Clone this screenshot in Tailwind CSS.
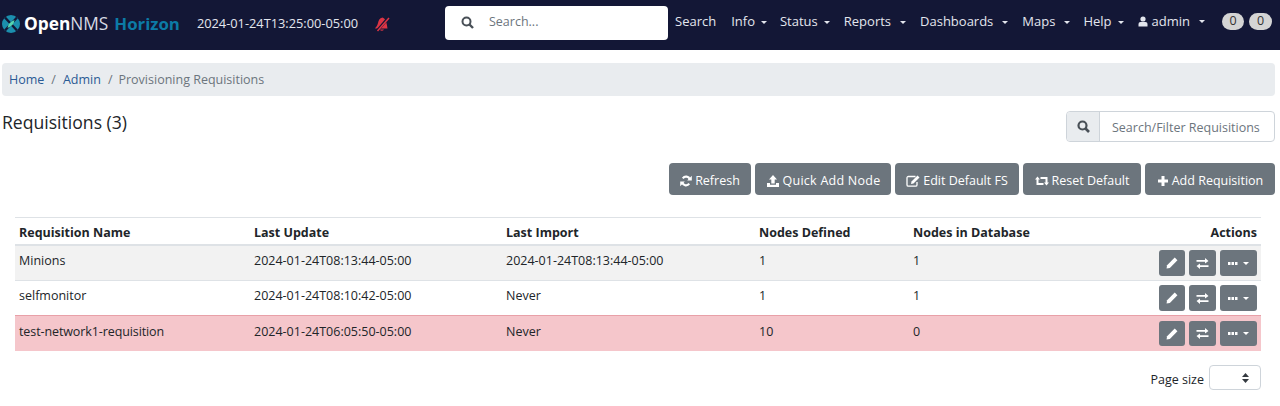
<!DOCTYPE html>
<html><head><meta charset="utf-8"><script src="https://cdn.jsdelivr.net/npm/@tailwindcss/browser@4"></script></head>
<body class="bg-white font-['Open_Sans',sans-serif] text-[12.5px] text-[#212529] h-[406px] overflow-hidden">
<nav class="h-[50px] bg-[#131736] flex items-center text-[#e3e6ee] text-[13px]">
  <div class="flex items-center w-[445px] shrink-0 h-full pb-[2px]">
    <svg class="ml-[2px] w-[18px] h-[18px] mr-[4px]" viewBox="0 0 18 18"><circle cx="9" cy="9" r="9" fill="#1b8fae"/><path d="M3 2.500L15 15.500M15 2.500L3 15.500" stroke="#131736" stroke-width="2.400"/><path d="M5.500 13Q6 7.500 12.500 5Q12 10.500 5.500 13Z" fill="#55d6b2"/></svg>
    <span class="text-[17.3px] leading-none text-white font-bold">Open<span class="font-normal text-[#d8dbe4]">NMS</span></span>
    <span class="text-[16.8px] leading-none font-bold text-[#0c7ba6] ml-[6px]">Horizon</span>
    <span class="ml-[17px] text-[12.8px] text-[#e3e6ee]">2024-01-24T13:25:00-05:00</span>
    <svg class="ml-[16px] w-[16px] h-[16px]" viewBox="0 0 16 16"><path d="M8.500 1.500C5.500 2 4.500 4.500 4 7C3.500 9.500 2 11 1 12.500H13.500C13 9 12.500 3 8.500 1.500Z" fill="#dc3545"/><path d="M5.500 13.500Q8 16 10 13.500Z" fill="#dc3545"/><path d="M15 1L3 15" stroke="#131736" stroke-width="2.800"/><path d="M15 2L3.500 15" stroke="#dc3545" stroke-width="1.500"/></svg>
  </div>
  <div class="w-[223px] h-[34px] bg-white rounded-[4px] flex items-center shrink-0 mt-[-5px]">
    <svg class="ml-[16px] w-[13px] h-[13px]" viewBox="0 0 13 13"><circle cx="5.500" cy="5.500" r="4" fill="none" stroke="#495057" stroke-width="2"/><path d="M8.500 8.500L12 12" stroke="#495057" stroke-width="2.400"/></svg>
    <span class="ml-[15px] text-[#6c757d] text-[12.5px]">Search...</span>
  </div>
  <div class="flex items-center ml-[7px] mt-[-7px] whitespace-nowrap">
    <span>Search</span>
    <span class="ml-[15px]">Info<span class="ml-[6px] inline-block align-middle border-x-[3px] border-t-[3px] border-x-transparent border-t-[#e3e6ee]"></span></span>
    <span class="ml-[13px]">Status<span class="ml-[6px] inline-block align-middle border-x-[3px] border-t-[3px] border-x-transparent border-t-[#e3e6ee]"></span></span>
    <span class="ml-[14px]">Reports<span class="ml-[9px] inline-block align-middle border-x-[3px] border-t-[3px] border-x-transparent border-t-[#e3e6ee]"></span></span>
    <span class="ml-[14px]">Dashboards<span class="ml-[9px] inline-block align-middle border-x-[3px] border-t-[3px] border-x-transparent border-t-[#e3e6ee]"></span></span>
    <span class="ml-[14px]">Maps<span class="ml-[9px] inline-block align-middle border-x-[3px] border-t-[3px] border-x-transparent border-t-[#e3e6ee]"></span></span>
    <span class="ml-[13px]">Help<span class="ml-[6px] inline-block align-middle border-x-[3px] border-t-[3px] border-x-transparent border-t-[#e3e6ee]"></span></span>
    <span class="ml-[14px] flex items-center"><svg class="w-[10px] h-[11px] mr-[4px]" viewBox="0 0 10 11"><circle cx="5" cy="3" r="2.600" fill="#e3e6ee"/><path d="M0.500 10.500V8Q0.500 6 2.500 6H7.500Q9.500 6 9.500 8V10.500Z" fill="#e3e6ee"/></svg>admin<span class="ml-[9px] inline-block align-middle border-x-[3px] border-t-[3px] border-x-transparent border-t-[#e3e6ee]"></span></span>
    <span class="ml-[17px] flex gap-[5px]"><span class="w-[22px] h-[17px] rounded-full bg-[#d4d4d4] text-[#333] text-[12.5px] flex items-center justify-center">0</span><span class="w-[23px] h-[17px] rounded-full bg-[#d4d4d4] text-[#333] text-[12.5px] flex items-center justify-center">0</span></span>
  </div>
</nav>
<div class="mt-[13px] ml-[2px] mr-[5px] h-[33px] bg-[#e9ecef] rounded-[4px] flex items-center px-[7px] text-[#6c757d] pt-[2px]">
  <span class="text-[#2a5a94]">Home</span><span class="mx-[7px]">/</span><span class="text-[#2a5a94]">Admin</span><span class="ml-[7px] mr-[6px]">/</span><span>Provisioning Requisitions</span>
</div>
<div class="flex justify-between items-start mt-[15px] pr-[5px] pl-[2px] h-[52px]">
  <h1 class="text-[17.6px] leading-[24px] mt-[-1px]">Requisitions (3)</h1>
  <div class="flex w-[209px] h-[31px] border border-[#ced4da] rounded-[4px] bg-white">
    <span class="w-[33px] bg-[#e9ecef] border-r border-[#ced4da] flex items-center justify-center rounded-l-[4px]"><svg class="w-[13px] h-[13px]" viewBox="0 0 13 13"><circle cx="5.500" cy="5.500" r="4" fill="none" stroke="#495057" stroke-width="2.200"/><path d="M8.500 8.500L12 12" stroke="#495057" stroke-width="2.600"/></svg></span>
    <span class="pl-[12px] pt-[3px] flex items-center text-[#6c757d]">Search/Filter Requisitions</span>
  </div>
</div>
<div class="flex justify-end gap-[4px] pr-[5px] h-[32px] text-white">
  <button class="w-[82px] h-[32px] pt-[4px] bg-[#6c757d] rounded-[4px] flex items-center justify-center gap-[3px]"><svg class="w-[12px] h-[12px]" viewBox="0 0 12 12"><path d="M9.800 4.300A4 4 0 0 0 2.800 3.300M2.200 7.700A4 4 0 0 0 9.200 8.700" fill="none" stroke="#fff" stroke-width="2.200"/><path d="M11.800 0.800V5.500H7.200ZM0.200 11.200V6.500H4.800Z" fill="#fff"/></svg>Refresh</button>
  <button class="w-[136px] h-[32px] pt-[4px] bg-[#6c757d] rounded-[4px] flex items-center justify-center gap-[3px]"><svg class="w-[14px] h-[12px]" viewBox="0 0 14 12"><path d="M7 0L11 4.500H8.700V8.500H5.300V4.500H3ZM1 8H4V9.700H10V8H13V12H1Z" fill="#fff"/></svg><span class="tracking-[0.25px]">Quick Add Node</span></button>
  <button class="w-[124px] h-[32px] pt-[4px] bg-[#6c757d] rounded-[4px] flex items-center justify-center gap-[3px]"><svg class="w-[14px] h-[12px]" viewBox="0 0 14 12"><path d="M9.500 1.500H2.500Q1 1.500 1 3V10Q1 11.200 2.500 11.200H9.500Q11 11.200 11 10V7" fill="none" stroke="#fff" stroke-width="1.300"/><path d="M11.500 0.500L13.500 2.500L7.500 8.500L5 9L5.500 6.500Z" fill="#fff"/></svg>Edit Default FS</button>
  <button class="w-[118px] h-[32px] pt-[4px] bg-[#6c757d] rounded-[4px] flex items-center justify-center gap-[3px]"><svg class="w-[14px] h-[12px]" viewBox="0 0 14 12"><path d="M2.500 4V9H8.500M11.500 8V3H5.500" fill="none" stroke="#fff" stroke-width="2"/><path d="M0 4.500H5L2.500 1.500ZM9 7.500H14L11.500 10.500Z" fill="#fff"/></svg>Reset Default</button>
  <button class="w-[130px] h-[32px] pt-[4px] bg-[#6c757d] rounded-[4px] flex items-center justify-center gap-[3px]"><svg class="w-[12px] h-[12px]" viewBox="0 0 12 12"><path d="M4.500 1H7.500V4.500H11V7.500H7.500V11H4.500V7.500H1V4.500H4.500Z" fill="#fff"/></svg>Add Requisition</button>
</div>
<div class="ml-[15px] mr-[19px] mt-[22px] border-t border-[#dee2e6] leading-[17px]">
  <div class="grid grid-cols-[235px_252px_253px_154px_1fr_auto] h-[28px] items-center pl-[4px] pr-[4px] pt-[3px] font-bold border-b-2 border-[#dee2e6]">
    <span>Requisition Name</span><span>Last Update</span><span>Last Import</span><span>Nodes Defined</span><span>Nodes in Database</span><span>Actions</span>
  </div>
  <div class="grid grid-cols-[235px_252px_253px_154px_1fr_auto] h-[35px] items-start pt-[6px] pl-[4px] pr-[4px] bg-[#f2f2f2] border-b border-[#dee2e6]">
    <span>Minions</span><span>2024-01-24T08:13:44-05:00</span><span>2024-01-24T08:13:44-05:00</span><span>1</span><span>1</span>
    <div class="flex gap-[4px] mt-[-2px]">
      <button class="w-[26px] h-[26px] bg-[#6c757d] rounded-[3px] flex items-center justify-center"><svg class="w-[12px] h-[12px]" viewBox="0 0 11 11"><path d="M8 0.500L10.500 3L3.500 10L0.500 10.500L1 7.500Z" fill="#fff"/></svg></button>
      <button class="w-[27px] h-[26px] bg-[#6c757d] rounded-[3px] flex items-center justify-center"><svg class="w-[13px] h-[11px]" viewBox="0 0 13 11"><path d="M0.500 2H9V0L12.500 3L9 5.500V3.800H0.500ZM12.500 7.300H4V5.500L0.500 8L4 11V9.100H12.500Z" fill="#fff"/></svg></button>
      <button class="w-[37px] h-[26px] bg-[#6c757d] rounded-[3px] flex items-center justify-center gap-[5px]"><svg class="w-[10px] h-[3px]" viewBox="0 0 10 3"><rect width="2.500" height="3" fill="#fff"/><rect x="3.500" width="2.500" height="3" fill="#fff"/><rect x="7" width="2.500" height="3" fill="#fff"/></svg><span class="border-x-[3.500px] border-t-[3.500px] border-x-transparent border-t-white"></span></button>
    </div>
  </div>
  <div class="grid grid-cols-[235px_252px_253px_154px_1fr_auto] h-[35px] items-start pt-[6px] pl-[4px] pr-[4px] border-b border-[#e8a0a8]">
    <span>selfmonitor</span><span>2024-01-24T08:10:42-05:00</span><span>Never</span><span>1</span><span>1</span>
    <div class="flex gap-[4px] mt-[-2px]">
      <button class="w-[26px] h-[26px] bg-[#6c757d] rounded-[3px] flex items-center justify-center"><svg class="w-[12px] h-[12px]" viewBox="0 0 11 11"><path d="M8 0.500L10.500 3L3.500 10L0.500 10.500L1 7.500Z" fill="#fff"/></svg></button>
      <button class="w-[27px] h-[26px] bg-[#6c757d] rounded-[3px] flex items-center justify-center"><svg class="w-[13px] h-[11px]" viewBox="0 0 13 11"><path d="M0.500 2H9V0L12.500 3L9 5.500V3.800H0.500ZM12.500 7.300H4V5.500L0.500 8L4 11V9.100H12.500Z" fill="#fff"/></svg></button>
      <button class="w-[37px] h-[26px] bg-[#6c757d] rounded-[3px] flex items-center justify-center gap-[5px]"><svg class="w-[10px] h-[3px]" viewBox="0 0 10 3"><rect width="2.500" height="3" fill="#fff"/><rect x="3.500" width="2.500" height="3" fill="#fff"/><rect x="7" width="2.500" height="3" fill="#fff"/></svg><span class="border-x-[3.500px] border-t-[3.500px] border-x-transparent border-t-white"></span></button>
    </div>
  </div>
  <div class="grid grid-cols-[235px_252px_253px_154px_1fr_auto] h-[35px] items-start pt-[7px] pl-[4px] pr-[4px] bg-[#f5c6cb]">
    <span class="tracking-[-0.1px]">test-network1-requisition</span><span>2024-01-24T06:05:50-05:00</span><span>Never</span><span>10</span><span>0</span>
    <div class="flex gap-[4px] mt-[-2px]">
      <button class="w-[26px] h-[25px] bg-[#6c757d] rounded-[3px] flex items-center justify-center"><svg class="w-[12px] h-[12px]" viewBox="0 0 11 11"><path d="M8 0.500L10.500 3L3.500 10L0.500 10.500L1 7.500Z" fill="#fff"/></svg></button>
      <button class="w-[27px] h-[25px] bg-[#6c757d] rounded-[3px] flex items-center justify-center"><svg class="w-[13px] h-[11px]" viewBox="0 0 13 11"><path d="M0.500 2H9V0L12.500 3L9 5.500V3.800H0.500ZM12.500 7.300H4V5.500L0.500 8L4 11V9.100H12.500Z" fill="#fff"/></svg></button>
      <button class="w-[37px] h-[25px] bg-[#6c757d] rounded-[3px] flex items-center justify-center gap-[5px]"><svg class="w-[10px] h-[3px]" viewBox="0 0 10 3"><rect width="2.500" height="3" fill="#fff"/><rect x="3.500" width="2.500" height="3" fill="#fff"/><rect x="7" width="2.500" height="3" fill="#fff"/></svg><span class="border-x-[3.500px] border-t-[3.500px] border-x-transparent border-t-white"></span></button>
    </div>
  </div>
</div>
<div class="flex justify-end items-center pr-[19px] mt-[14px] gap-[5px]">
  <span class="pt-[6px]">Page size</span>
  <div class="w-[52px] h-[25px] border border-[#ced4da] rounded-[4px] flex items-center justify-end pr-[11px]"><svg class="w-[7px] h-[10px]" viewBox="0 0 7 10"><path d="M3.500 0L7 4H0ZM3.500 10L0 6H7Z" fill="#343a40"/></svg></div>
</div>
</body></html>
